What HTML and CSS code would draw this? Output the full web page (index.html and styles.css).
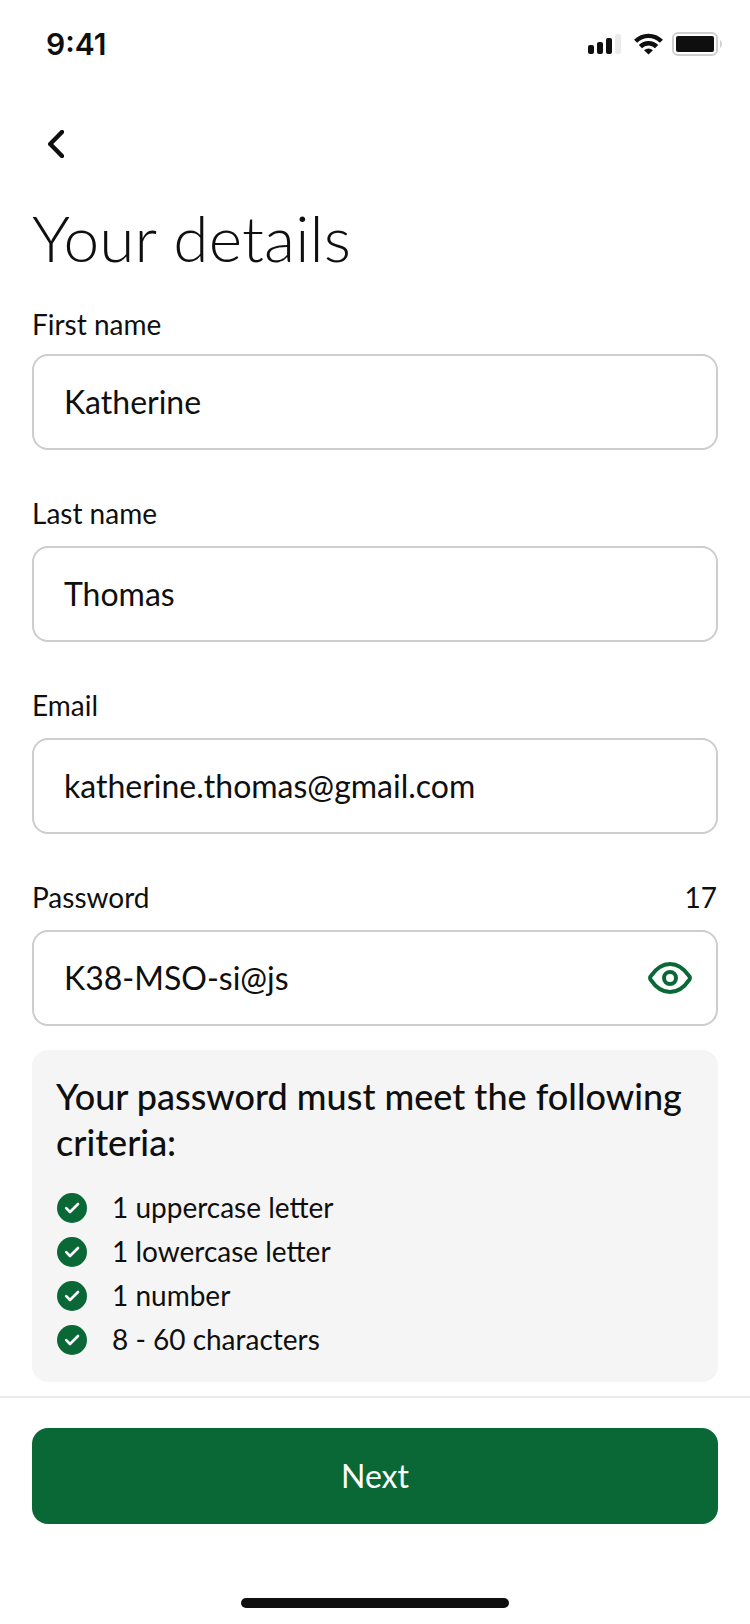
FILE: index.html
```
<!DOCTYPE html>
<html lang="en">
<head>
    <meta charset="UTF-8">
    <meta name="viewport" content="width=device-width, initial-scale=1.0">
    <title>Your details</title>
    <link rel="stylesheet" href="styles.css">
</head>
<body>
    <header class="status-bar">
        <span class="time">9:41</span>
        <svg class="status-icons" width="136" height="24" viewBox="0 0 136 24">
            <!-- signal -->
            <g fill="#0f0f0f">
                <rect x="0" y="13" width="6" height="9" rx="2"/>
                <rect x="9" y="10" width="6" height="12" rx="2"/>
                <rect x="18" y="6" width="6" height="16" rx="2"/>
                <rect x="27" y="2" width="6" height="20" rx="2" fill="#ebebeb"/>
            </g>
            <!-- wifi -->
            <g fill="none" stroke="#0f0f0f" stroke-width="4.4">
                <path d="M47.6 9.2a18.2 18.2 0 0 1 25.8 0"/>
                <path d="M52.4 14.6a11.4 11.4 0 0 1 16.2 0"/>
                <path d="M56 18.2Q60.5 14.6 65 18.2L60.5 22.4z" fill="#0f0f0f" stroke="none"/>
            </g>
            <!-- battery -->
            <rect x="85" y="1" width="44" height="22" rx="5" fill="none" stroke="#cfcfcf" stroke-width="2"/>
            <rect x="88" y="4" width="38" height="16" rx="2" fill="#0f0f0f"/>
            <path d="M132 8q2 1.5 2 4t-2 4z" fill="#cfcfcf"/>
        </svg>
    </header>

    <nav class="nav">
        <button type="button" class="back" aria-label="Back">
            <svg width="16" height="28" viewBox="0 0 16 28">
                <path d="M14 2L2.2 14L14 26" fill="none" stroke="#0f0f0f" stroke-width="4.4" stroke-linecap="round" stroke-linejoin="round"/>
            </svg>
        </button>
    </nav>

    <main class="content">
        <h1>Your details</h1>
        <form class="form">
            <div class="field first">
                <label for="firstName">First name</label>
                <input type="text" id="firstName" value="Katherine">
            </div>
            <div class="field">
                <label for="lastName">Last name</label>
                <input type="text" id="lastName" value="Thomas">
            </div>
            <div class="field">
                <label for="email">Email</label>
                <input type="text" id="email" value="katherine.thomas@gmail.com">
            </div>
            <div class="field">
                <div class="label-row">
                    <label for="password">Password</label>
                    <span class="count">17</span>
                </div>
                <div class="password-box">
                    <input type="text" id="password" value="K38-MSO-si@js">
                    <svg class="eye" width="44" height="32" viewBox="0 0 44 32" fill="none" stroke="#0a6836" stroke-width="4">
                        <path d="M2.6 14.4C7.2 7.6 14 2 22 2S36.8 7.6 41.4 14.4Q42.4 16 41.4 17.6C36.8 24.4 30 30 22 30S7.2 24.4 2.6 17.6Q1.6 16 2.6 14.4z"/>
                        <circle cx="22" cy="16" r="6"/>
                    </svg>
                </div>
            </div>
        </form>

        <section class="criteria">
            <h2>Your password must meet the following criteria:</h2>
            <ul>
                <li><svg class="check" viewBox="0 0 30 30"><circle cx="15" cy="15" r="15"/><path d="M9.2 15.2L13 19L21 11"/></svg><span>1 uppercase letter</span></li>
                <li><svg class="check" viewBox="0 0 30 30"><circle cx="15" cy="15" r="15"/><path d="M9.2 15.2L13 19L21 11"/></svg><span>1 lowercase letter</span></li>
                <li><svg class="check" viewBox="0 0 30 30"><circle cx="15" cy="15" r="15"/><path d="M9.2 15.2L13 19L21 11"/></svg><span>1 number</span></li>
                <li><svg class="check" viewBox="0 0 30 30"><circle cx="15" cy="15" r="15"/><path d="M9.2 15.2L13 19L21 11"/></svg><span>8 - 60 characters</span></li>
            </ul>
        </section>
    </main>

    <footer class="footer">
        <button type="button" class="next">Next</button>
        <div class="home-bar"></div>
    </footer>
</body>
</html>
```
FILE: styles.css
```
* {
    box-sizing: border-box;
}
body {
    font-family: Lato, sans-serif;
    background-color: #fff;
    color: #0f0f0f;
    height: 1624px;
    margin: 0;
    display: flex;
    flex-direction: column;
}
.status-bar {
    height: 88px;
    padding: 0 28px 0 46px;
    display: flex;
    justify-content: space-between;
    align-items: center;
}
.time {
    font-family: Inter, sans-serif;
    font-size: 30px;
    font-weight: 600;
}
.status-icons {
    width: 136px;
    margin-right: -2px;
}
.nav {
    height: 112px;
    padding: 42px 48px 0;
}
.back {
    display: block;
    border: none;
    background: none;
    padding: 0;
    cursor: pointer;
}
.back svg {
    display: block;
}
.content {
    padding: 0 32px;
}
h1 {
    font-size: 64px;
    font-weight: 300;
    line-height: 76px;
    letter-spacing: 0.1px;
    margin: 0 0 32px;
}
.field {
    display: flex;
    flex-direction: column;
    gap: 17px;
    margin-bottom: 47px;
}
.field.first {
    gap: 14px;
}
.field:last-child {
    margin-bottom: 24px;
}
label,
.count {
    font-size: 28px;
    line-height: 32px;
}
.label-row {
    display: flex;
    justify-content: space-between;
    padding-right: 1px;
}
input {
    width: 100%;
    height: 96px;
    border: 2px solid #cdcdcd;
    border-radius: 16px;
    padding: 0 30px 2px;
    background-color: #fff;
    color: #0f0f0f;
    font-family: inherit;
    font-size: 32px;
}
.password-box {
    position: relative;
}
.eye {
    position: absolute;
    right: 26px;
    top: 32px;
}
.criteria {
    height: 332px;
    background-color: #f5f5f5;
    border-radius: 16px;
    padding: 23px 24px 0;
}
h2 {
    font-size: 36px;
    font-weight: 500;
    line-height: 46px;
    margin: 0 0 21px;
}
ul {
    list-style: none;
    margin: 0;
    padding: 0;
}
li {
    display: flex;
    align-items: center;
    gap: 25px;
    height: 44px;
    padding-left: 1px;
    font-size: 28px;
}
li span {
    padding-bottom: 2px;
}
.check {
    width: 30px;
    height: 30px;
    fill: #0a6836;
}
.check path {
    fill: none;
    stroke: #fff;
    stroke-width: 2.6;
    stroke-linecap: round;
    stroke-linejoin: round;
}
.footer {
    margin-top: 14px;
    border-top: 2px solid #ebebeb;
    padding: 30px 32px 0;
}
.next {
    display: block;
    width: 100%;
    height: 96px;
    border: none;
    border-radius: 16px;
    padding: 0 0 2px;
    background-color: #0a6836;
    color: #fff;
    font-family: inherit;
    font-size: 32px;
    cursor: pointer;
}
.home-bar {
    width: 268px;
    height: 10px;
    margin: 74px auto 0;
    border-radius: 5px;
    background-color: #0f0f0f;
}
```
